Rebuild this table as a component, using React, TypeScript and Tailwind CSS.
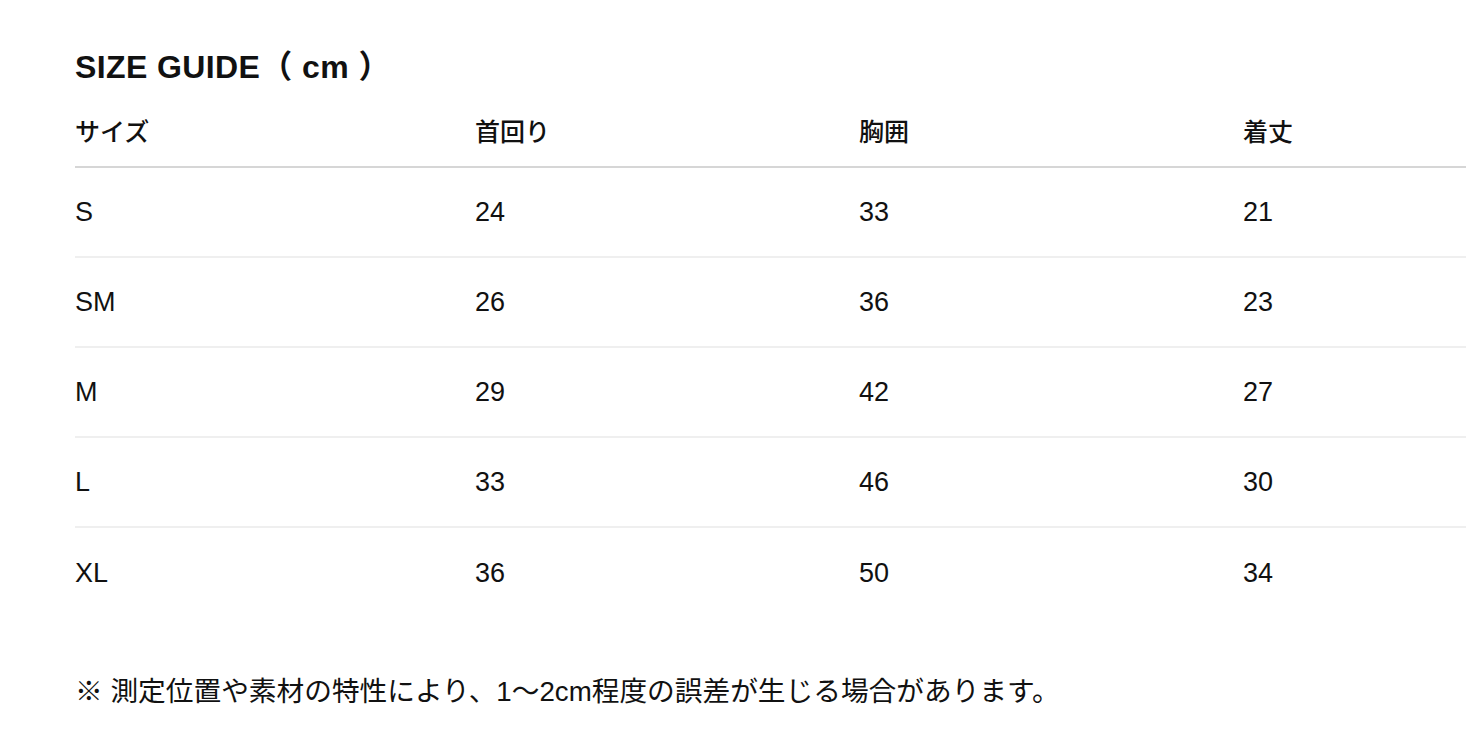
const headers = ['サイズ', '首回り', '胸囲', '着丈'];

const rows = [
  ['S', '24', '33', '21'],
  ['SM', '26', '36', '23'],
  ['M', '29', '42', '27'],
  ['L', '33', '46', '30'],
  ['XL', '36', '50', '34'],
];

const cols = 'grid grid-cols-[400px_384px_384px_1fr]';

export default function App() {
  return (
    <main
      className="min-h-screen overflow-hidden bg-white pl-[75px] pt-[49px] text-[#111]"
      style={{ fontFamily: '"Liberation Sans", "Noto Sans CJK JP", sans-serif' }}
    >
      <h2 className="text-[32px] font-bold leading-[36px] tracking-[0.4px]">SIZE GUIDE（ cm ）</h2>

      <div className="mt-[17px]">
        <div className={`${cols} h-[66px] items-center border-b-2 border-[#d6d6d6] pb-[2px]`}>
          {headers.map((h) => (
            <span key={h} className="text-[25px] font-medium">
              {h}
            </span>
          ))}
        </div>

        {rows.map((r, i) => (
          <div
            key={r[0]}
            className={`${cols} h-[90px] items-center ${i < rows.length - 1 ? 'border-b-2 border-[#efefef]' : ''}`}
          >
            {r.map((cell, j) => (
              <span key={j} className="text-[27px]">
                {cell}
              </span>
            ))}
          </div>
        ))}
      </div>

      <p className="mt-[56px] text-[27.7px] leading-[36px]">
        ※ 測定位置や素材の特性により、1～2cm程度の誤差が生じる場合があります。
      </p>
    </main>
  );
}
